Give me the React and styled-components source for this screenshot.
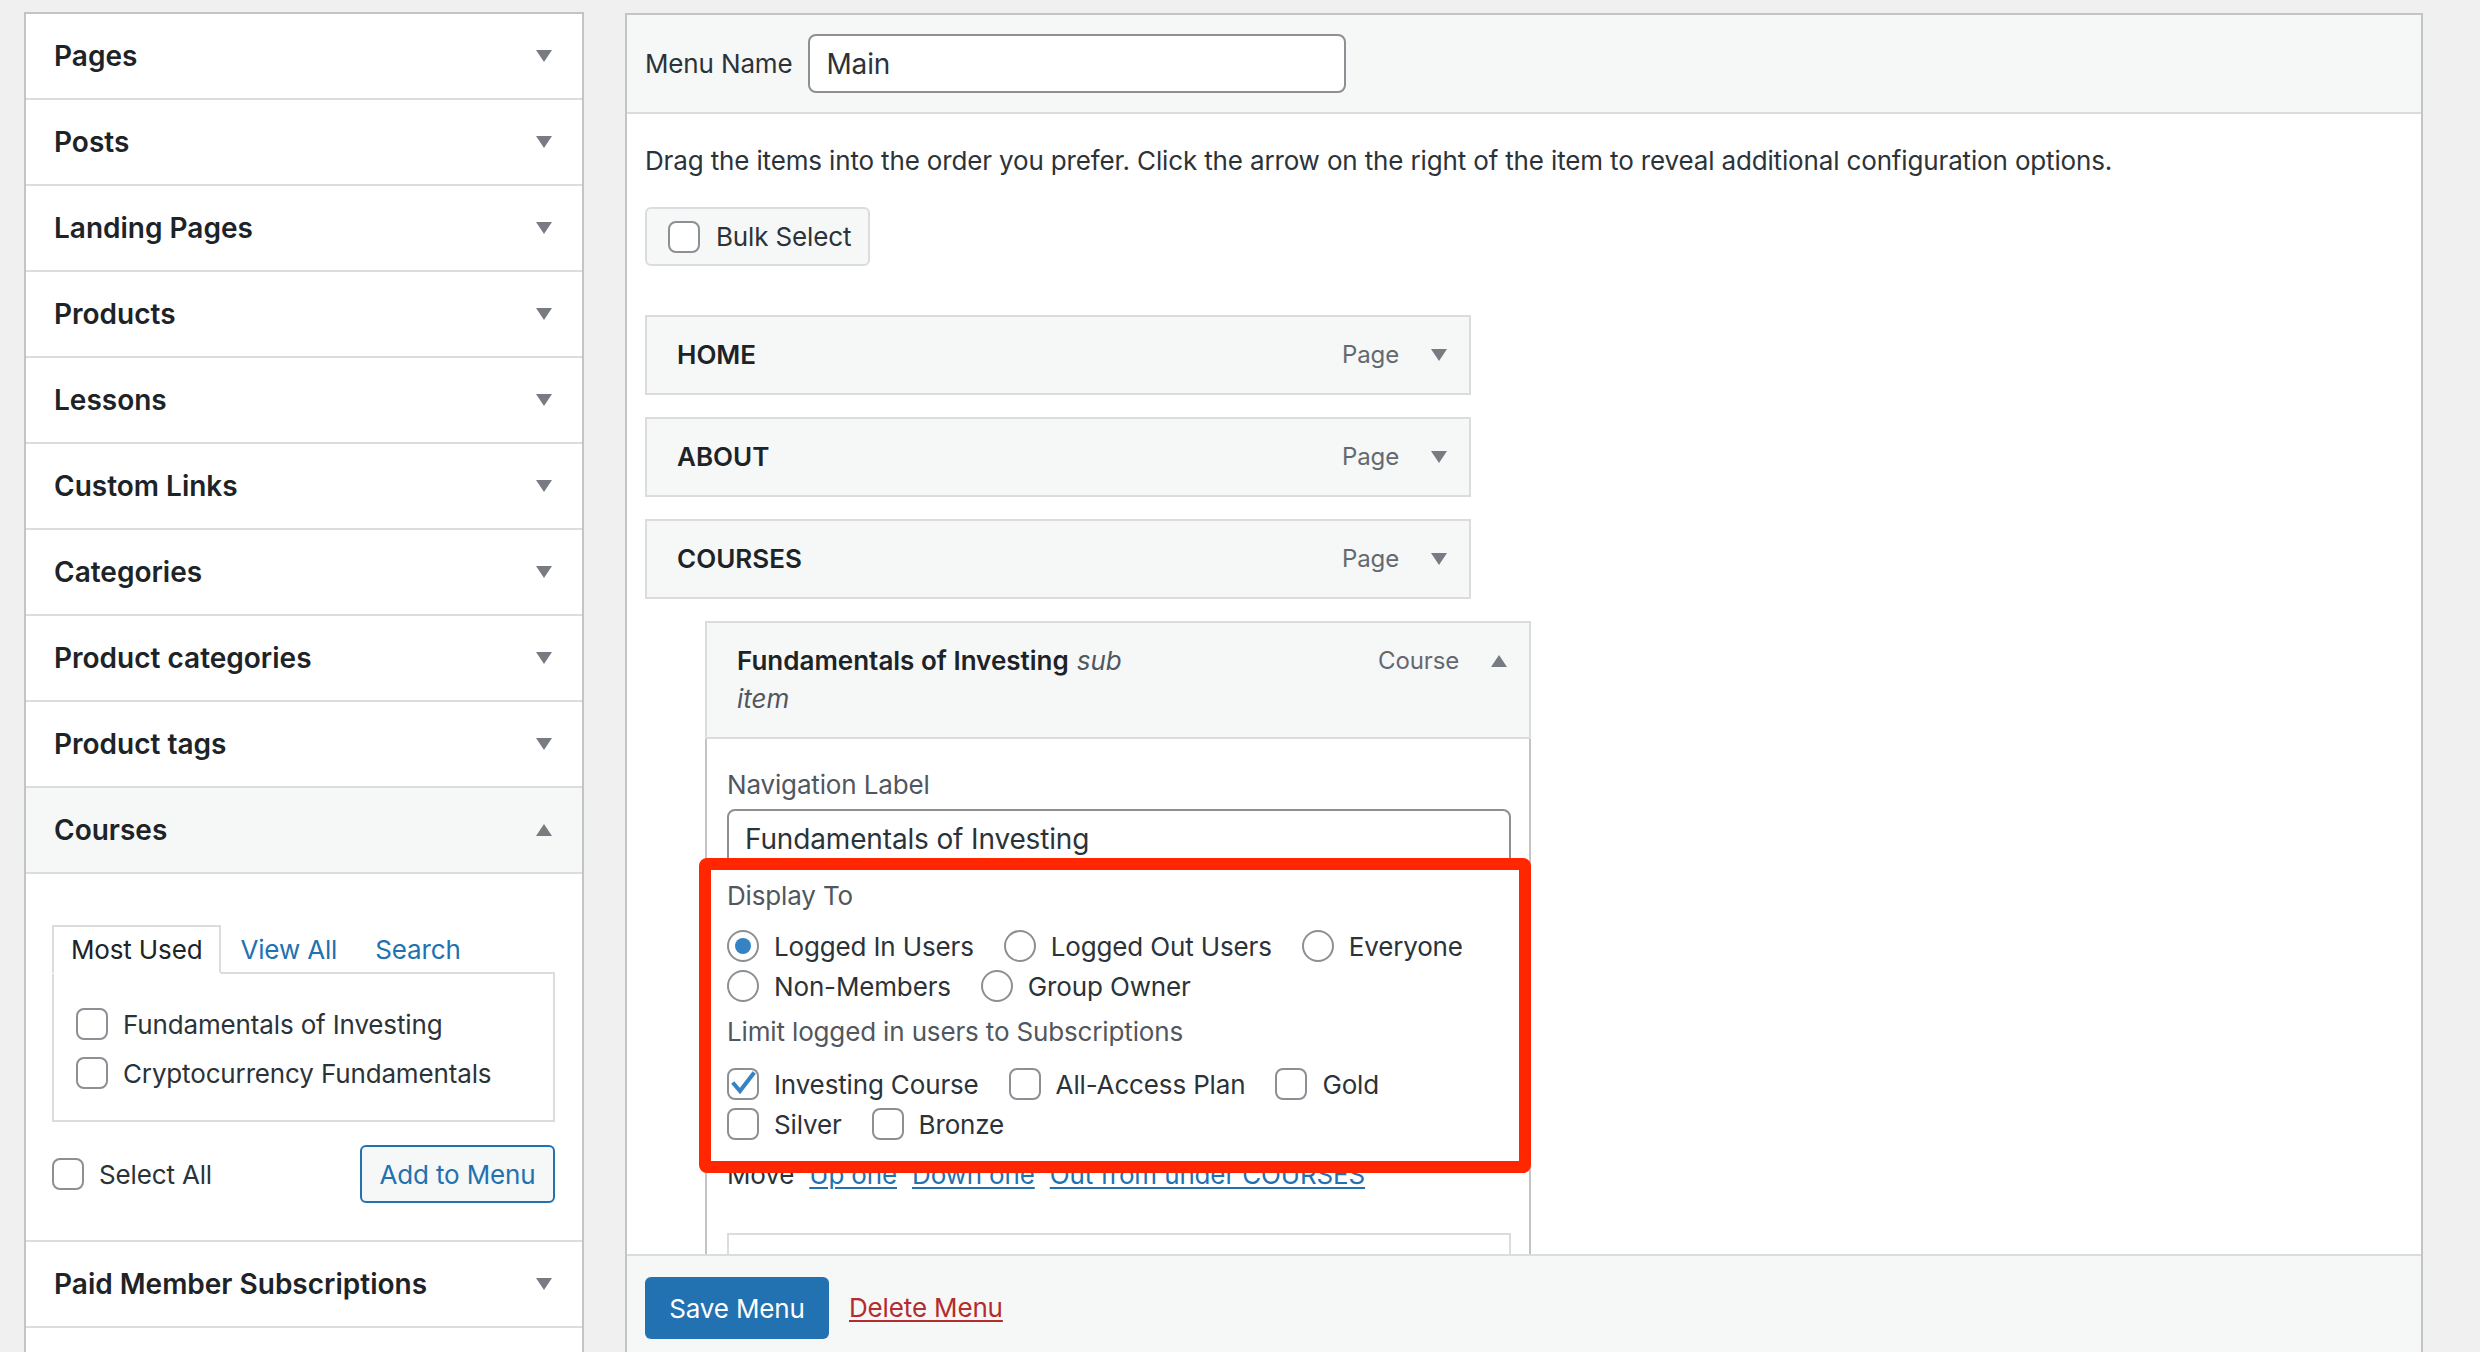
import React from "react";
import styled, { createGlobalStyle } from "styled-components";

const Global = createGlobalStyle`
  html, body { margin: 0; padding: 0; background: #f0f0f1; }
  body { font-family: Inter, "Liberation Sans", sans-serif; color: #2c3338; letter-spacing: -0.15px; }
  #root { width: 2480px; height: 1352px; overflow: hidden; }
  * { box-sizing: border-box; }
`;

const Page = styled.div`
  display: flex;
  align-items: flex-start;
  gap: 41px;
  padding: 12px 0 0 24px;
  height: 1352px;
`;

/* ---------- Sidebar ---------- */
const Sidebar = styled.div`
  width: 560px;
  flex-shrink: 0;
  background: #fff;
  border: 2px solid #c3c4c7;
  border-bottom: none;
`;

const SectionHeader = styled.div`
  height: 86px;
  display: flex;
  align-items: center;
  justify-content: space-between;
  padding: 0 30px 0 28px;
  border-bottom: 2px solid #dcdcde;
  background: ${(p) => (p.$open ? "#f6f7f7" : "#fff")};
  font-size: 28px;
  font-weight: 600;
  letter-spacing: 0;
  color: #1d2327;
`;

const Caret = styled.span`
  width: 0;
  height: 0;
  border-left: 8px solid transparent;
  border-right: 8px solid transparent;
  ${(p) =>
    p.$up
      ? "border-bottom: 12px solid #787c82;"
      : "border-top: 12px solid #787c82;"}
`;

const SectionBody = styled.div`
  padding: 51px 27px 37px 26px;
  border-bottom: 2px solid #dcdcde;
`;

const Tabs = styled.div`
  display: flex;
  position: relative;
  z-index: 1;
`;

const Tab = styled.div`
  height: 49px;
  padding: 0 17px;
  display: flex;
  align-items: center;
  font-size: 26px;
  color: ${(p) => (p.$active ? "#1d2327" : "#2271b1")};
  border: 2px solid ${(p) => (p.$active ? "#dcdcde" : "transparent")};
  border-bottom-color: ${(p) => (p.$active ? "#fff" : "transparent")};
  background: ${(p) => (p.$active ? "#fff" : "transparent")};
`;

const TabPanel = styled.div`
  margin-top: -2px;
  border: 2px solid #dcdcde;
  padding: 30px 20px 27px 22px;
  display: flex;
  flex-direction: column;
  gap: 9px;
`;

const CheckRow = styled.label`
  display: flex;
  align-items: center;
  gap: 15px;
  height: 40px;
  font-size: 26px;
  color: #2c3338;
  white-space: nowrap;
`;

const SectionActions = styled.div`
  margin-top: 23px;
  display: flex;
  align-items: center;
  justify-content: space-between;
`;

const SecondaryButton = styled.button`
  height: 58px;
  width: 195px;
  border: 2px solid #2271b1;
  border-radius: 6px;
  background: #f6f7f7;
  color: #2271b1;
  font-family: inherit;
  letter-spacing: inherit;
  font-size: 26px;
`;

/* ---------- form controls ---------- */
const Box = styled.span`
  width: 32px;
  height: 32px;
  flex-shrink: 0;
  border: 2px solid #8c8f94;
  border-radius: ${(p) => (p.$round ? "50%" : "8px")};
  background: #fff;
  display: inline-flex;
  align-items: center;
  justify-content: center;
  position: relative;
`;

const Dot = styled.span`
  width: 16px;
  height: 16px;
  border-radius: 50%;
  background: #3582c4;
`;

const CheckMark = styled.svg`
  position: absolute;
  left: -3px;
  top: -3px;
`;

const Checkbox = ({ checked }) => (
  <Box>
    {checked && (
      <CheckMark width="34" height="34" viewBox="0 0 34 34">
        <path d="M8 17 L14 24 L27 7" fill="none" stroke="#3582c4" strokeWidth="4" strokeLinecap="square" />
      </CheckMark>
    )}
  </Box>
);

const Radio = ({ checked }) => <Box $round>{checked && <Dot />}</Box>;

/* ---------- Editor ---------- */
const Editor = styled.div`
  width: 1798px;
  height: 1340px;
  margin-top: 1px;
  flex-shrink: 0;
  display: flex;
  flex-direction: column;
  background: #fff;
  border: 2px solid #c3c4c7;
  border-bottom: none;
`;

const EditorHeader = styled.div`
  height: 99px;
  flex-shrink: 0;
  display: flex;
  align-items: center;
  gap: 16px;
  padding-left: 18px;
  background: #f6f7f7;
  border-bottom: 2px solid #dcdcde;
`;

const FieldLabel = styled.div`
  font-size: 26px;
  line-height: 38px;
  color: ${(p) => p.$color || "#2c3338"};
  margin-top: ${(p) => p.$mt || 0}px;
`;

const TextInput = styled.div`
  width: ${(p) => p.$width || "100%"};
  height: ${(p) => p.$height || 60}px;
  margin-top: ${(p) => p.$mt || 0}px;
  border: 2px solid #8c8f94;
  border-radius: 8px;
  background: #fff;
  display: flex;
  align-items: center;
  padding: 0 16px;
  font-size: 28px;
  color: #2c3338;
`;

const EditorBody = styled.div`
  flex: 1;
  overflow: hidden;
  padding: 28px 0 0 18px;
`;

const BulkButton = styled.div`
  margin-top: 27px;
  width: 225px;
  height: 59px;
  display: flex;
  align-items: center;
  gap: 16px;
  padding-left: 21px;
  border: 2px solid #dcdcde;
  border-radius: 6px;
  background: #f6f7f7;
  font-size: 26px;
  color: #2c3338;
`;

const ItemList = styled.div`
  margin-top: 49px;
  display: flex;
  flex-direction: column;
  gap: 22px;
`;

const Item = styled.div`
  width: 826px;
  margin-left: ${(p) => p.$depth * 60}px;
`;

const Handle = styled.div`
  display: flex;
  align-items: flex-start;
  justify-content: space-between;
  padding: 19px 22px 19px 30px;
  border: 2px solid #dcdcde;
  background: #f6f7f7;
  line-height: 38px;
`;

const ItemTitle = styled.div`
  max-width: 420px;
  font-size: 26px;
  font-weight: 600;
  letter-spacing: 0;
  color: #1d2327;
`;

const SubTag = styled.span`
  font-weight: 400;
  font-style: italic;
  color: #50575e;
  margin-left: 8px;
`;

const ItemControls = styled.div`
  display: flex;
  align-items: center;
  gap: 32px;
  height: 38px;
  font-size: 24px;
  color: #646970;
`;

const ItemSettings = styled.div`
  border: 2px solid #c3c4c7;
  border-top: none;
  border-bottom: none;
  padding: 27px 18px 0 20px;
  display: flex;
  flex-direction: column;
`;

const Highlight = styled.div`
  position: relative;
  margin-top: 8px;
  &::after {
    content: "";
    position: absolute;
    top: -19px;
    left: -28px;
    right: -20px;
    bottom: -29px;
    border: 12px solid #ff2600;
    border-radius: 8px;
    pointer-events: none;
  }
`;

const OptionRow = styled.div`
  display: flex;
  align-items: center;
  height: 40px;
  margin-top: ${(p) => p.$mt || 0}px;
`;

const Option = styled.label`
  display: flex;
  align-items: center;
  gap: 15px;
  margin-right: 30px;
  font-size: 26px;
  color: #2c3338;
  white-space: nowrap;
`;

const MoveLine = styled.div`
  margin-top: 12px;
  font-size: 26px;
  line-height: 38px;
  color: #2c3338;
  display: flex;
  gap: 15px;
`;

const Link = styled.a`
  color: ${(p) => (p.$danger ? "#b32d2e" : "#2271b1")};
  text-decoration: underline;
  text-underline-offset: 3px;
`;

const OriginalBox = styled.div`
  margin-top: 39px;
  border: 2px solid #dcdcde;
  padding: 14px 20px;
  font-size: 26px;
  line-height: 38px;
  color: #646970;
`;

const EditorFooter = styled.div`
  height: 99px;
  flex-shrink: 0;
  display: flex;
  align-items: flex-start;
  gap: 20px;
  padding: 21px 0 0 18px;
  background: #f6f7f7;
  border-top: 2px solid #dcdcde;
  font-size: 26px;
`;

const PrimaryButton = styled.button`
  width: 184px;
  height: 62px;
  border: none;
  border-radius: 6px;
  background: #2271b1;
  color: #fff;
  font-family: inherit;
  letter-spacing: inherit;
  font-size: 26px;
`;

const DeleteLink = styled(Link)`
  line-height: 62px;
`;

const sections = [
  "Pages",
  "Posts",
  "Landing Pages",
  "Products",
  "Lessons",
  "Custom Links",
  "Categories",
  "Product categories",
  "Product tags",
];

const MenuItem = ({ title, type, depth = 0, open, sub, children }) => (
  <Item $depth={depth}>
    <Handle>
      <ItemTitle>
        {title}
        {sub && <SubTag>sub item</SubTag>}
      </ItemTitle>
      <ItemControls>
        {type}
        <Caret $up={open} />
      </ItemControls>
    </Handle>
    {children}
  </Item>
);

export default function App() {
  return (
    <>
      <Global />
      <Page>
        <Sidebar>
          {sections.map((s) => (
            <SectionHeader key={s}>
              {s}
              <Caret />
            </SectionHeader>
          ))}
          <SectionHeader $open>
            Courses
            <Caret $up />
          </SectionHeader>
          <SectionBody>
            <Tabs>
              <Tab $active>Most Used</Tab>
              <Tab>View All</Tab>
              <Tab>Search</Tab>
            </Tabs>
            <TabPanel>
              <CheckRow>
                <Checkbox />
                Fundamentals of Investing
              </CheckRow>
              <CheckRow>
                <Checkbox />
                Cryptocurrency Fundamentals
              </CheckRow>
            </TabPanel>
            <SectionActions>
              <CheckRow>
                <Checkbox />
                Select All
              </CheckRow>
              <SecondaryButton>Add to Menu</SecondaryButton>
            </SectionActions>
          </SectionBody>
          <SectionHeader>
            Paid Member Subscriptions
            <Caret />
          </SectionHeader>
          <SectionHeader />
        </Sidebar>

        <Editor>
          <EditorHeader>
            <FieldLabel>Menu Name</FieldLabel>
            <TextInput $width="538px" $height={59}>Main</TextInput>
          </EditorHeader>
          <EditorBody>
            <FieldLabel>
              Drag the items into the order you prefer. Click the arrow on the right of the item to reveal additional
              configuration options.
            </FieldLabel>
            <BulkButton>
              <Checkbox />
              Bulk Select
            </BulkButton>
            <ItemList>
              <MenuItem title="HOME" type="Page" />
              <MenuItem title="ABOUT" type="Page" />
              <MenuItem title="COURSES" type="Page" />
              <MenuItem title="Fundamentals of Investing" type="Course" depth={1} open sub>
                <ItemSettings>
                  <FieldLabel $color="#50575e">Navigation Label</FieldLabel>
                  <TextInput $mt={5}>Fundamentals of Investing</TextInput>
                  <Highlight>
                    <FieldLabel $color="#50575e">Display To</FieldLabel>
                    <OptionRow $mt={11}>
                      <Option>
                        <Radio checked />
                        Logged In Users
                      </Option>
                      <Option>
                        <Radio />
                        Logged Out Users
                      </Option>
                      <Option>
                        <Radio />
                        Everyone
                      </Option>
                    </OptionRow>
                    <OptionRow>
                      <Option>
                        <Radio />
                        Non-Members
                      </Option>
                      <Option>
                        <Radio />
                        Group Owner
                      </Option>
                    </OptionRow>
                    <FieldLabel $color="#50575e" $mt={7}>
                      Limit logged in users to Subscriptions
                    </FieldLabel>
                    <OptionRow $mt={13}>
                      <Option>
                        <Checkbox checked />
                        Investing Course
                      </Option>
                      <Option>
                        <Checkbox />
                        All-Access Plan
                      </Option>
                      <Option>
                        <Checkbox />
                        Gold
                      </Option>
                    </OptionRow>
                    <OptionRow>
                      <Option>
                        <Checkbox />
                        Silver
                      </Option>
                      <Option>
                        <Checkbox />
                        Bronze
                      </Option>
                    </OptionRow>
                  </Highlight>
                  <MoveLine>
                    Move
                    <Link>Up one</Link>
                    <Link>Down one</Link>
                    <Link>Out from under COURSES</Link>
                  </MoveLine>
                  <OriginalBox>
                    Original: <Link>Fundamentals of Investing</Link>
                  </OriginalBox>
                </ItemSettings>
              </MenuItem>
            </ItemList>
          </EditorBody>
          <EditorFooter>
            <PrimaryButton>Save Menu</PrimaryButton>
            <DeleteLink $danger>Delete Menu</DeleteLink>
          </EditorFooter>
        </Editor>
      </Page>
    </>
  );
}
